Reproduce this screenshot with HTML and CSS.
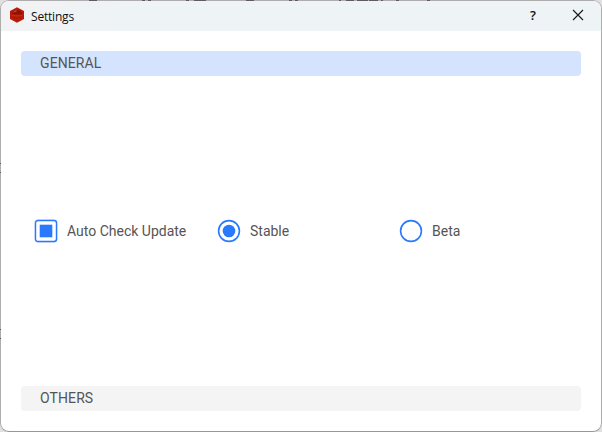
FILE: index.html
```html
<!DOCTYPE html>
<html lang="en">
<head>
<meta charset="utf-8">
<title>Settings</title>
<link rel="stylesheet" href="styles.css">
</head>
<body>
<main class="window">
  <header class="titlebar">
    <svg class="app-icon" width="16" height="16" viewBox="0 0 16 16">
      <path d="M8 0.2 15 4v8L8 15.8 1 12V4Z" fill="#b81c06"/>
      <path d="M2.8 7Q4 3.2 8 3Q12 3.2 13.2 7Q8 8.2 2.8 7Z" fill="#8e1006"/>
      <path d="M4.5 5.3Q5.4 4.1 7.6 3.9" fill="none" stroke="#e87060" stroke-width=".8"/>
      <path d="M2.5 8.3Q8 9.5 13.5 8.3" fill="none" stroke="#cb2b0e" stroke-width="1"/>
      <path d="M4 10.5Q8 11.8 12 10.5" fill="none" stroke="#9c1806" stroke-width=".8"/>
    </svg>
    <h1 class="title">Settings</h1>
    <button class="help" aria-label="Help">?</button>
    <button class="close" aria-label="Close">
      <svg width="12" height="12" viewBox="0 0 12 12"><path d="M1 1 11 11M11 1 1 11" stroke="#161616" stroke-width="1.1"/></svg>
    </button>
  </header>
  <div class="content">
    <h2 class="section active">GENERAL</h2>
    <div class="options">
      <label class="option">
        <svg width="24" height="24" viewBox="0 0 24 24"><rect x=".5" y=".5" width="23" height="23" rx="3" fill="#c8dcff"/><rect x="1.5" y="1.5" width="21" height="21" rx="2.5" fill="#fff" stroke="#2979ff" stroke-width="1.4"/><rect x="5.7" y="5.7" width="12.6" height="12.6" fill="#2979ff"/></svg>
        <span>Auto Check Update</span>
      </label>
      <label class="option">
        <svg width="24" height="24" viewBox="0 0 24 24"><circle cx="12" cy="12" r="10.4" fill="none" stroke="#2979ff" stroke-width="1.6"/><circle cx="12" cy="12" r="6.3" fill="#2979ff"/></svg>
        <span>Stable</span>
      </label>
      <label class="option">
        <svg width="24" height="24" viewBox="0 0 24 24"><circle cx="12" cy="12" r="10.4" fill="none" stroke="#2979ff" stroke-width="1.6"/></svg>
        <span>Beta</span>
      </label>
    </div>
    <h2 class="section">OTHERS</h2>
  </div>
  <svg class="edge" width="602" height="432" viewBox="0 0 602 432" aria-hidden="true">
    <path d="M89 .5h8M142 .5h3M148 .5h3M186 .5h3M194 .5h12M246 .5h8M289 .5h3M295 .5h3M339 .5h2M346 .5h8M357 .5h11M369 .5h9M381 .5h2M396 .5h3M427 .5h3M0 163.5h1M0 172.5h1M0 329.5h1M0 338.5h1" stroke="#615b5d"/>
  </svg>
</main>
</body>
</html>
```
FILE: styles.css
```css
* { box-sizing: border-box; }
body { margin: 0; background: #e0e0e0; font-family: Roboto, sans-serif; color: #555; }
.window {
  position: relative;
  width: 602px;
  height: 432px;
  display: flex;
  flex-direction: column;
  border: 1px solid #adadad;
  border-bottom-color: #979797;
  border-radius: 9px;
  background: #fff;
}
.titlebar {
  height: 30px;
  flex: none;
  display: flex;
  align-items: center;
  padding-left: 8px;
  border-radius: 8px 8px 0 0;
  background: linear-gradient(90deg, #f2f2f4, #eef3f6 20%);
  color: #111;
}
.app-icon { margin-bottom: 2px; }
.title { flex: 1; margin: 0 0 0 6px; font: 12px/17px "Open Sans", sans-serif; letter-spacing: -0.2px; }
button { height: 30px; padding: 0; border: 0; background: transparent; color: #111; }
.help { width: 44px; font: 600 13px "Open Sans", sans-serif; padding-bottom: 2px; }
.close { width: 46px; display: grid; place-items: center; padding-bottom: 2px; }
.content { flex: 1; display: flex; flex-direction: column; padding: 20px; }
.section {
  height: 25px;
  margin: 0;
  padding-left: 19px;
  border-radius: 4px;
  background: #f4f4f4;
  font-size: 14px;
  font-weight: 400;
  line-height: 25px;
  letter-spacing: 0.1px;
}
.active { background: #d4e4ff; }
.options { flex: 1; display: grid; grid-template-columns: 183px 182px 1fr; align-items: center; padding-left: 13px; }
.option { display: flex; align-items: center; gap: 9px; font-size: 14px; line-height: 24px; }
.edge { position: absolute; top: -1px; left: -1px; pointer-events: none; }
```
